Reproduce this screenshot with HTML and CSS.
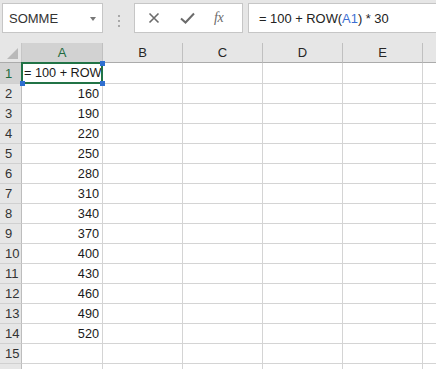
FILE: index.html
```html
<!DOCTYPE html>
<html>
  <head>
    <meta charset="utf-8" />
    <title>Classeur</title>
    <link rel="stylesheet" href="styles.css">
  </head>
  <body>
    <div class="toolbar">
      <div class="namebox">
        <span>SOMME</span>
        <span class="arrow"></span>
      </div>
      <div class="dots"><i></i><i></i><i></i></div>
      <div class="fxbox">
        <svg class="ico" width="12" height="12" viewBox="0 0 12 12">
          <path d="M1.5 1.5 L10.5 10.5 M10.5 1.5 L1.5 10.5" stroke="#6b6b6b" stroke-width="1.6" fill="none" />
        </svg>
        <svg class="ico" width="15" height="12" viewBox="0 0 15 12">
          <path d="M1 6.5 L5.5 10.5 L14 1.5" stroke="#6b6b6b" stroke-width="2" fill="none" />
        </svg>
        <span class="fx">fx</span>
      </div>
      <div class="formula">= 100 + ROW(<span class="ref">A1</span>) * 30</div>
    </div>

    <div class="sheet">
      <div class="corner"><span class="tri"></span></div>
      <div class="colhead sel">A</div>
      <div class="colhead">B</div>
      <div class="colhead">C</div>
      <div class="colhead">D</div>
      <div class="colhead">E</div>
      <div class="colhead"></div>
    </div>

    <script>
      // construit les lignes de la feuille
      var sheet = document.querySelector(".sheet");
      for (var r = 1; r <= 16; r++) {
        var head = document.createElement("div");
        head.className = "rowhead" + (r == 1 ? " sel" : "");
        if (r < 16) head.textContent = r;
        sheet.appendChild(head);
        for (var c = 0; c < 6; c++) {
          var cell = document.createElement("div");
          cell.className = "cell";
          if (c == 0 && r == 1) {
            cell.className = "cell active";
            cell.innerHTML = '<span class="edit">= 100 + ROW(A1) * 30</span>' +
              '<i class="h tr"></i><i class="h br"></i><i class="h bl"></i>';
          } else if (c == 0 && r <= 14) {
            cell.className = "cell num";
            cell.textContent = 100 + r * 30;
          }
          sheet.appendChild(cell);
        }
      }
    </script>
  </body>
</html>
```

FILE: styles.css
```css
body {
  margin: 0;
  background-color: #ffffff;
  font-family: "Liberation Sans", Arial, sans-serif;
  overflow: hidden;
  height: 369px;
}

.toolbar {
  height: 43px;
  box-sizing: border-box;
  padding-top: 3px;
  background-color: #e6e6e6;
  display: flex;
  align-items: flex-start;
}

.namebox {
  margin-left: 2px;
  width: 101px;
  height: 30px;
  box-sizing: border-box;
  border: 1px solid #c6c6c6;
  background-color: #ffffff;
  display: flex;
  align-items: center;
  justify-content: space-between;
  padding: 0 6px 0 6px;
  font-size: 13px;
  color: #333333;
}

.arrow {
  width: 0;
  height: 0;
  border-left: 3.5px solid transparent;
  border-right: 3.5px solid transparent;
  border-top: 4px solid #777777;
  margin-top: 1px;
}

.dots {
  margin-left: 15px;
  margin-top: 12px;
  width: 2px;
  display: flex;
  flex-direction: column;
  gap: 3px;
}
.dots i {
  width: 2px;
  height: 2px;
  background-color: #a8a8a8;
}

.fxbox {
  margin-left: 14px;
  width: 109px;
  height: 30px;
  box-sizing: border-box;
  border: 1px solid #c6c6c6;
  background-color: #ffffff;
  display: flex;
  align-items: center;
  padding-left: 13px;
}
.fxbox .ico {
  margin-right: 20px;
}
.fxbox .ico + .ico {
  margin-right: 19px;
}
.fx {
  font-family: "Liberation Serif", serif;
  font-style: italic;
  font-size: 14px;
  color: #6b6b6b;
  letter-spacing: -0.5px;
}

.formula {
  margin-left: 5px;
  flex: 1;
  height: 30px;
  box-sizing: border-box;
  border: 1px solid #c6c6c6;
  border-right: none;
  background-color: #ffffff;
  display: flex;
  align-items: center;
  padding-left: 10px;
  font-size: 12.9px;
  color: #222222;
  white-space: pre;
}
.ref {
  color: #3c6fd3;
}

.sheet {
  display: grid;
  grid-template-columns: 22px 81px repeat(5, 80px);
  grid-template-rows: 20px 21px;
  grid-auto-rows: 20px;
  font-size: 12.7px;
  color: #1a1a1a;
}

.corner {
  background-color: #e6e6e6;
  border-right: 1px solid #c6c6c6;
  border-bottom: 1px solid #ababab;
  position: relative;
}
.tri {
  position: absolute;
  right: 3px;
  bottom: 3px;
  width: 0;
  height: 0;
  border-left: 11px solid transparent;
  border-bottom: 11px solid #b9b9b9;
}

.colhead {
  background-color: #e6e6e6;
  border-right: 1px solid #c0c0c0;
  border-bottom: 1px solid #ababab;
  display: flex;
  align-items: center;
  justify-content: center;
  font-size: 13px;
  color: #262626;
}
.colhead.sel {
  background-color: #d2d2d2;
  color: #1e6b40;
}

.rowhead {
  background-color: #e6e6e6;
  border-right: 1px solid #bdbdbd;
  border-bottom: 1px solid #d0d0d0;
  display: flex;
  align-items: center;
  padding-left: 5px;
  font-size: 13px;
  color: #333333;
}
.rowhead.sel {
  background-color: #d2d2d2;
  color: #1e6b40;
}

.cell {
  border-right: 1px solid #d4d4d4;
  border-bottom: 1px solid #d4d4d4;
  display: flex;
  align-items: center;
}
.cell.num {
  justify-content: flex-end;
  padding-right: 3px;
}

.cell.active {
  position: relative;
  padding-left: 2px;
}
.edit {
  white-space: pre;
  overflow: hidden;
  width: 78px;
}
.cell.active::after {
  content: "";
  position: absolute;
  top: -1px;
  left: -1px;
  right: -1px;
  bottom: -1px;
  border: 2px solid #217346;
}
.h {
  position: absolute;
  width: 5px;
  height: 5px;
  background-color: #2f6fd0;
  z-index: 2;
}
.h.tr {
  top: -2px;
  right: -3px;
}
.h.br {
  bottom: -3px;
  right: -3px;
}
.h.bl {
  bottom: -3px;
  left: -2px;
}
```
